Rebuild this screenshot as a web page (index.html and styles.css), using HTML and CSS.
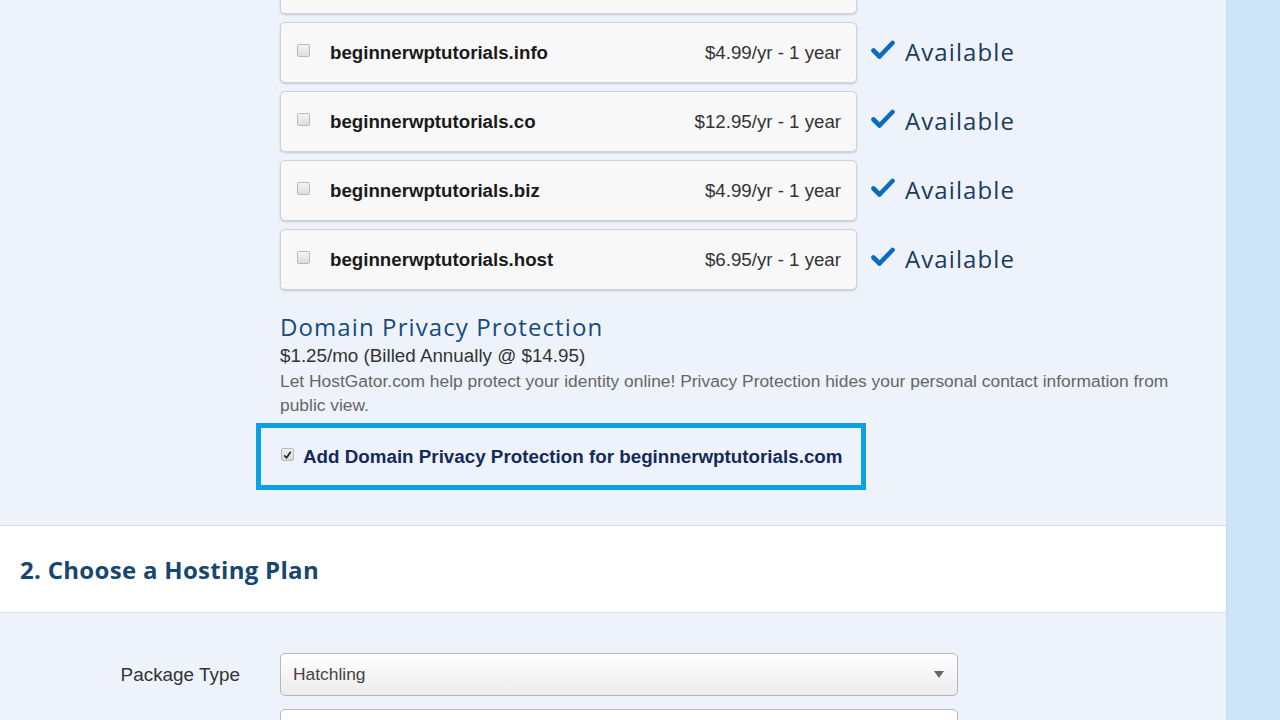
FILE: index.html
```html
<!DOCTYPE html>
<html>
<head>
<meta charset="utf-8">
<link rel="stylesheet" href="styles.css">
</head>
<body>
<div class="page">
  <main class="main">
    <section class="domains">
      <ul class="domain-list">
        <li class="domain-row"><div class="domain-card"></div></li>
        <li class="domain-row"><div class="domain-card"><span class="cb"></span><span class="dname">beginnerwptutorials.info</span><span class="price">$4.99/yr - 1 year</span></div><div class="avail"><svg class="check" viewBox="0 0 24 20" width="24" height="20"><path d="M2.5 10.5 L8.5 16.5 L21.5 3" fill="none" stroke="#0b6cbd" stroke-width="4.6" stroke-linecap="round" stroke-linejoin="round"/></svg><span>Available</span></div></li>
        <li class="domain-row"><div class="domain-card"><span class="cb"></span><span class="dname">beginnerwptutorials.co</span><span class="price">$12.95/yr - 1 year</span></div><div class="avail"><svg class="check" viewBox="0 0 24 20" width="24" height="20"><path d="M2.5 10.5 L8.5 16.5 L21.5 3" fill="none" stroke="#0b6cbd" stroke-width="4.6" stroke-linecap="round" stroke-linejoin="round"/></svg><span>Available</span></div></li>
        <li class="domain-row"><div class="domain-card"><span class="cb"></span><span class="dname">beginnerwptutorials.biz</span><span class="price">$4.99/yr - 1 year</span></div><div class="avail"><svg class="check" viewBox="0 0 24 20" width="24" height="20"><path d="M2.5 10.5 L8.5 16.5 L21.5 3" fill="none" stroke="#0b6cbd" stroke-width="4.6" stroke-linecap="round" stroke-linejoin="round"/></svg><span>Available</span></div></li>
        <li class="domain-row"><div class="domain-card"><span class="cb"></span><span class="dname">beginnerwptutorials.host</span><span class="price">$6.95/yr - 1 year</span></div><div class="avail"><svg class="check" viewBox="0 0 24 20" width="24" height="20"><path d="M2.5 10.5 L8.5 16.5 L21.5 3" fill="none" stroke="#0b6cbd" stroke-width="4.6" stroke-linecap="round" stroke-linejoin="round"/></svg><span>Available</span></div></li>
      </ul>
      <div class="privacy">
        <h2 class="privacy-title">Domain Privacy Protection</h2>
        <p class="privacy-price">$1.25/mo (Billed Annually @ $14.95)</p>
        <p class="privacy-desc">Let HostGator.com help protect your identity online! Privacy Protection hides your personal contact information from public view.</p>
      </div>
      <div class="privacy-box">
        <span class="cb checked"><svg viewBox="0 0 12 12" width="12" height="12"><path d="M2.5 6.5 L5 9 L9.5 2.5" fill="none" stroke="#222" stroke-width="1.8"/></svg></span>
        <span class="privacy-label">Add Domain Privacy Protection for beginnerwptutorials.com</span>
      </div>
    </section>
    <section class="plan-head">
      <h2>2. Choose a Hosting Plan</h2>
    </section>
    <section class="plan-form">
      <div class="form-row">
        <label class="form-label">Package Type</label>
        <div class="select"><span>Hatchling</span><span class="arrow"></span></div>
      </div>
      <div class="form-row">
        <label class="form-label"></label>
        <div class="select plain"></div>
      </div>
    </section>
  </main>
  <aside class="side"></aside>
</div>
</body>
</html>
```

FILE: styles.css
```css
* { box-sizing: border-box; }
html, body { margin: 0; padding: 0; }
body {
  width: 1280px;
  height: 720px;
  overflow: hidden;
  font-family: "Liberation Sans", Arial, sans-serif;
  background: #eef3fb;
}
.page { display: flex; width: 1280px; height: 720px; }
.main { width: 1226px; background: #eef3fb; }
.side { flex: 1; background: #cce4f6; border-left: 1px solid #c3dcef; }

.domains { padding-left: 280px; padding-bottom: 35px; }
.domain-list {
  list-style: none;
  margin: -47px 0 0 0;
  padding: 0;
  display: flex;
  flex-direction: column;
  gap: 8px;
}
.domain-row { display: flex; align-items: center; }
.domain-card {
  width: 577px;
  height: 61px;
  border: 1px solid #cfd2d6;
  border-radius: 5px;
  background: #f8f8f8;
  box-shadow: 0 1px 2px rgba(0,0,0,0.18);
  display: flex;
  align-items: center;
  padding: 0 15px 0 16px;
}
.cb {
  width: 13px;
  height: 13px;
  border: 1px solid #b9b9b9;
  border-radius: 2px;
  background: linear-gradient(#f4f4f4, #dedede);
  margin-top: -4px;
  flex: none;
}
.dname {
  margin-left: 20px;
  font-weight: bold;
  font-size: 18.7px;
  color: #1a1a1a;
}
.price {
  margin-left: auto;
  font-size: 18.7px;
  color: #333;
}
.avail {
  display: flex;
  align-items: center;
  margin-left: 14px;
  margin-top: -3px;
  font-family: "Open Sans", sans-serif;
  font-size: 24px;
  color: #1b3a5e;
  letter-spacing: 1.1px;
}
.check { margin-right: 10px; margin-top: -2px; }

.privacy { margin-top: 22px; width: 900px; }
.privacy-title {
  margin: 0;
  font-family: "Open Sans", sans-serif;
  font-weight: 500;
  font-size: 24px;
  line-height: 30px;
  color: #154c7e;
  letter-spacing: 1.1px;
}
.privacy-price {
  margin: 2px 0 0 0;
  font-size: 18.8px;
  line-height: 24px;
  color: #333;
}
.privacy-desc {
  margin: 1px 0 0 0;
  font-size: 17.4px;
  line-height: 24px;
  color: #666;
}
.privacy-box {
  margin: 6px 0 0 -24px;
  width: 610px;
  height: 67px;
  border: 5px solid #0ba1e7;
  display: flex;
  align-items: center;
  padding-left: 20px;
}
.privacy-box .cb {
  display: flex;
  align-items: center;
  justify-content: center;
  margin-top: -4px;
  background: linear-gradient(#f0f0f0, #d8d8d8);
}
.privacy-label {
  margin-left: 9px;
  font-weight: bold;
  font-size: 18.8px;
  color: #15295a;
}

.plan-head {
  background: #fff;
  border-top: 1px solid #d9dfe8;
  border-bottom: 1px solid #d9dfe8;
  height: 88px;
  display: flex;
  align-items: center;
  padding-left: 20px;
}
.plan-head h2 {
  margin: 0;
  font-family: "Open Sans", sans-serif;
  font-weight: 700;
  font-size: 24px;
  color: #164770;
  letter-spacing: 0.3px;
}

.plan-form { padding-top: 40px; display: flex; flex-direction: column; gap: 13px; }
.form-row { display: flex; align-items: center; }
.form-label {
  width: 280px;
  padding-right: 40px;
  text-align: right;
  font-size: 18.9px;
  color: #333;
}
.select {
  width: 678px;
  height: 43px;
  border: 1px solid #b7b7b7;
  border-radius: 5px;
  background: linear-gradient(#ffffff, #ececec);
  display: flex;
  align-items: center;
  padding: 0 13px 0 12px;
  font-size: 17.4px;
  color: #444;
}
.select.plain { background: #fff; }
.arrow {
  margin-left: auto;
  width: 0;
  height: 0;
  border-left: 5px solid transparent;
  border-right: 5px solid transparent;
  border-top: 7px solid #666;
}
```
